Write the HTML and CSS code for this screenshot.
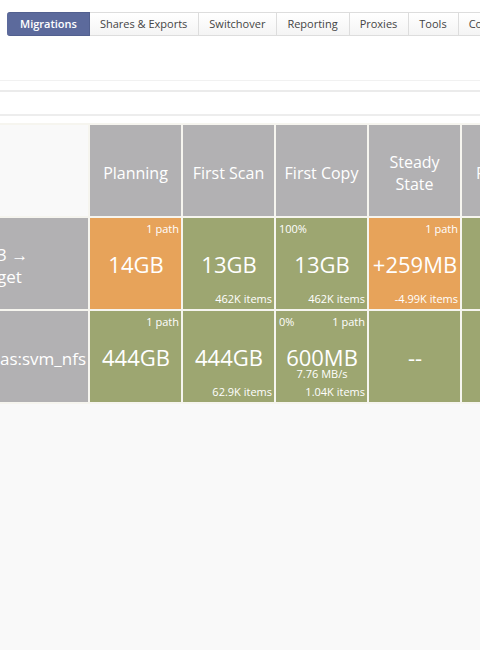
FILE: index.html
```html
<!DOCTYPE html>
<html lang="en">

<head>
  <meta charset="UTF-8">
  <meta name="viewport" content="width=device-width, initial-scale=1.0">
  <title>Migrations</title>
  <link rel="stylesheet" href="styles.css">
</head>

<body>
  <header class="top-bar">
    <nav class="tabs">
      <a href="#" class="tab active">Migrations</a>
      <a href="#" class="tab">Shares &amp; Exports</a>
      <a href="#" class="tab">Switchover</a>
      <a href="#" class="tab">Reporting</a>
      <a href="#" class="tab">Proxies</a>
      <a href="#" class="tab">Tools</a>
      <a href="#" class="tab">Co</a>
    </nav>
  </header>
  <div class="divider"></div>
  <div class="toolbar"></div>

  <main class="content">
    <table class="migrations">
      <thead>
        <tr>
          <td class="name"></td>
          <th scope="col">Planning</th>
          <th scope="col">First Scan</th>
          <th scope="col">First Copy</th>
          <th scope="col">Steady State</th>
          <th scope="col" class="cut">F</th>
        </tr>
      </thead>
      <tbody>
        <tr>
          <th scope="row" class="name"><div class="route">3 →<br>get</div></th>
          <td class="warn">
            <div class="cell">
              <div class="cell-top"><span></span><span>1 path</span></div>
              <div class="value">14GB</div>
            </div>
          </td>
          <td class="ok">
            <div class="cell">
              <div class="cell-top"></div>
              <div class="value">13GB</div>
              <div class="items">462K items</div>
            </div>
          </td>
          <td class="ok">
            <div class="cell">
              <div class="cell-top"><span>100%</span></div>
              <div class="value">13GB</div>
              <div class="items">462K items</div>
            </div>
          </td>
          <td class="warn">
            <div class="cell">
              <div class="cell-top"><span></span><span>1 path</span></div>
              <div class="value">+259MB</div>
              <div class="items">-4.99K items</div>
            </div>
          </td>
          <td class="ok"></td>
        </tr>
        <tr>
          <th scope="row" class="name"><div class="path">nas:svm_nfs</div></th>
          <td class="ok">
            <div class="cell">
              <div class="cell-top"><span></span><span>1 path</span></div>
              <div class="value">444GB</div>
            </div>
          </td>
          <td class="ok">
            <div class="cell">
              <div class="cell-top"></div>
              <div class="value">444GB</div>
              <div class="items">62.9K items</div>
            </div>
          </td>
          <td class="ok">
            <div class="cell">
              <div class="cell-top"><span>0%</span><span>1 path</span></div>
              <div class="value">600MB</div>
              <div class="rate">7.76 MB/s</div>
              <div class="items">1.04K items</div>
            </div>
          </td>
          <td class="ok">
            <div class="cell">
              <div class="cell-top"></div>
              <div class="value">--</div>
            </div>
          </td>
          <td class="ok"></td>
        </tr>
      </tbody>
    </table>
  </main>
</body>

</html>
```
FILE: styles.css
```css
body {
  margin: 0;
  min-height: 100vh;
  display: flex;
  flex-direction: column;
  overflow: hidden;
  font-family: "Open Sans", "Noto Sans", sans-serif;
  background-color: #fff;
}

/* tabs */
.top-bar {
  padding: 12px 0 44px 7px;
  overflow: hidden;
}

.tabs {
  display: flex;
}

.tab {
  flex: none;
  box-sizing: border-box;
  padding: 0 11px 0 10px;
  border: 1px solid #ddd;
  border-left: none;
  background: linear-gradient(#fff, #f4f4f4);
  color: #444;
  font-size: 11px;
  line-height: 22px;
  text-decoration: none;
}

.tab.active {
  padding: 0 12px 0 13px;
  border-color: #52608f;
  border-radius: 3px 0 0 3px;
  background: #5c6a9c;
  color: #fff;
  font-weight: 600;
}

/* toolbar */
.divider {
  height: 9px;
  border-top: 1px solid #f1f1f1;
}

.toolbar {
  height: 22px;
  border-top: 2px solid #ebebeb;
  border-bottom: 2px solid #ededed;
}

/* migration table */
.content {
  flex: 1;
  margin-top: 7px;
  overflow: hidden;
  background-color: #f9f9f9;
}

.migrations {
  width: 557px;
  margin-left: -2px;
  table-layout: fixed;
  border-spacing: 2px;
  background-color: #f6f5ef;
  color: #fff;
}

.migrations th,
.migrations td {
  height: 91px;
  padding: 0;
}

.migrations th {
  box-sizing: border-box;
  padding-top: 5px;
  background-color: #b2b1b3;
  font-size: 16px;
  font-weight: 400;
  line-height: 22px;
}

.migrations .name {
  width: 88px;
  font-size: 17px;
  text-align: left;
}

.migrations td.name {
  background-color: #f9f9f9;
}

.migrations .cut {
  padding-left: 14px;
  text-align: left;
}

.route {
  margin-left: -3px;
}

/* long paths keep their end visible */
.path {
  display: flex;
  justify-content: flex-end;
  padding-right: 2px;
}

.migrations .ok {
  background-color: #9da671;
}

.migrations .warn {
  background-color: #e7a35a;
}

.cell {
  display: flex;
  flex-direction: column;
  box-sizing: border-box;
  height: 91px;
  padding: 4px 2px 3px 3px;
  font-size: 11px;
  line-height: 14px;
}

.cell-top {
  display: flex;
  justify-content: space-between;
  height: 14px;
}

.value {
  margin-top: 18px;
  font-size: 22px;
  line-height: 20px;
  text-align: center;
  white-space: nowrap;
}

.rate {
  line-height: 14px;
  text-align: center;
}

.items {
  margin-top: auto;
  text-align: right;
}
```
